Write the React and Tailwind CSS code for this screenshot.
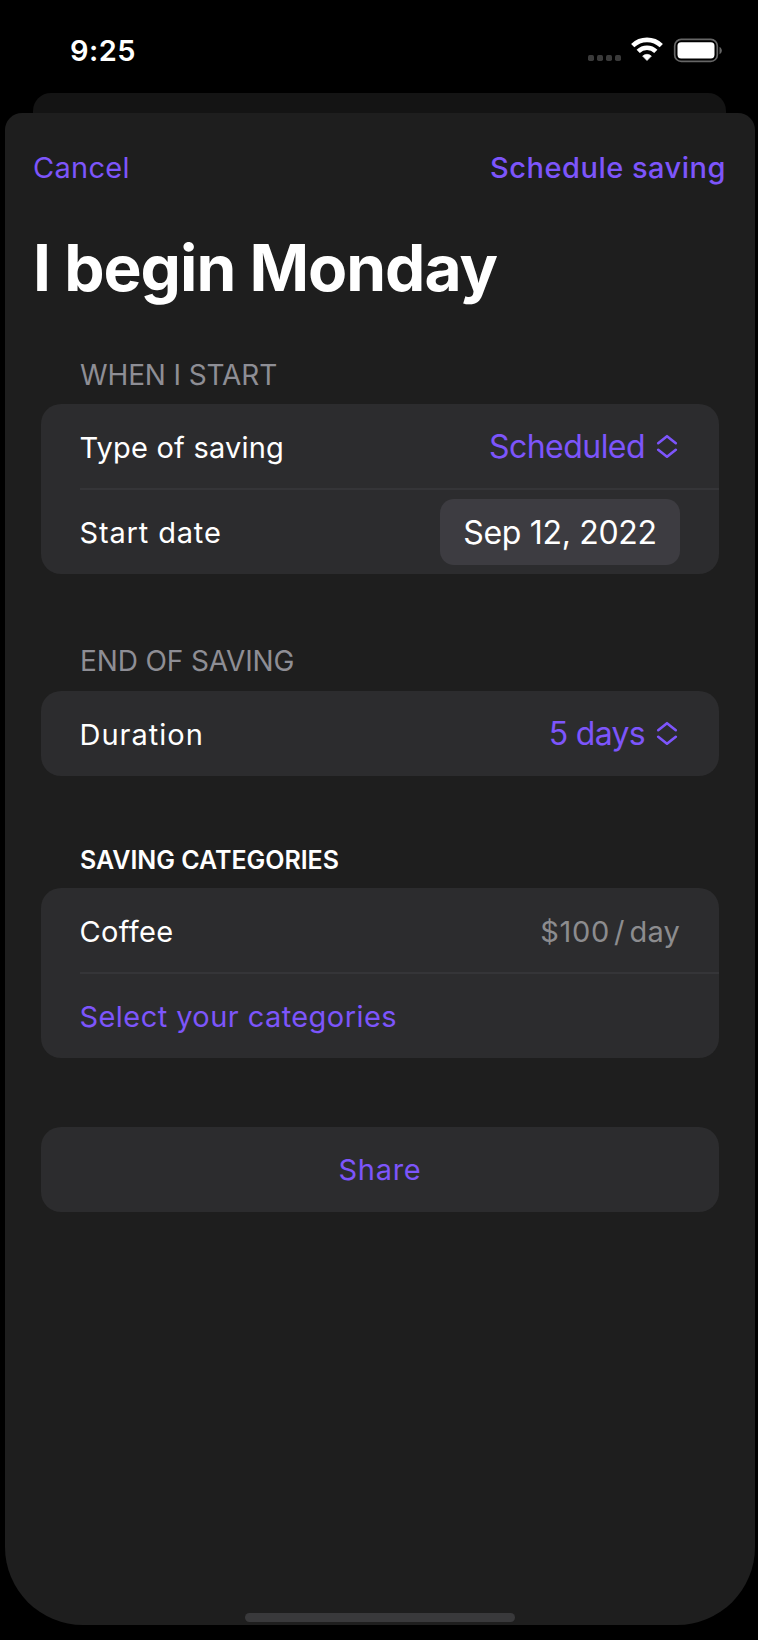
import React from "react";

function StatusBar() {
  return (
    <div className="flex h-[93px] items-start justify-between pl-[70px] pr-[35px]">
      <span className="mt-[35px] text-[29px] leading-[32px] font-semibold tracking-[0.5px]">9:25</span>
      <div className="mt-[37px] flex h-[26px] items-start">
        <svg width="34" height="8" viewBox="0 0 34 8" className="mt-[17px] fill-[#3a3a3a]">
          <rect x="0" y="1" width="6" height="6" rx="1.7" />
          <rect x="9" y="1" width="6" height="6" rx="1.7" />
          <rect x="18" y="1" width="6" height="6" rx="1.7" />
          <rect x="27" y="1" width="6" height="6" rx="1.7" />
        </svg>
        <svg width="32" height="24" viewBox="0 0 32 24" className="ml-[9px]">
          <g fill="none" stroke="#fff" strokeWidth="4.6">
            <path d="M1.7 8.6A20.6 20.6 0 0 1 30.3 8.6" />
            <path d="M7.2 14.3A12.6 12.6 0 0 1 24.8 14.3" />
          </g>
          <path d="M11.6 19.1a6.3 6.3 0 0 1 8.8 0L16 23.6Z" fill="#fff" stroke="#fff" strokeWidth="0.6" strokeLinejoin="round" />
        </svg>
        <svg width="50" height="26" viewBox="0 0 50 26" className="ml-[10px]">
          <rect x="1.7" y="2.4" width="42.6" height="22" rx="6.5" fill="none" stroke="#666" strokeWidth="1.7" />
          <rect x="4.5" y="5.2" width="37" height="16.2" rx="3.6" fill="#fff" />
          <path d="M46.5 10v7.2c1.5-.6 2.3-2 2.3-3.6s-.8-3-2.3-3.6Z" fill="#666" />
        </svg>
      </div>
    </div>
  );
}

function Chevrons() {
  return (
    <svg
      width="22"
      height="24"
      viewBox="0 0 22 24"
      className="-mt-px mr-[2px] ml-[11px]"
      fill="none"
      stroke="#7d55fb"
      strokeWidth="2.6"
      strokeLinecap="round"
      strokeLinejoin="round"
    >
      <path d="M2.2 9.2 11 2.2 19.8 9.2" />
      <path d="M2.2 15.8 11 22.8 19.8 15.8" />
    </svg>
  );
}

function Card({ children, className }) {
  return <div className={`mx-[36px] overflow-hidden rounded-[20px] bg-[#2c2c2e] ${className}`}>{children}</div>;
}

function Row({ children }) {
  return <div className="flex h-[85px] items-center justify-between pr-[39px] pl-[38.5px]">{children}</div>;
}

function Separator() {
  return <div className="-mt-px -mb-px ml-[39px] h-[2px] bg-[#353538]" />;
}

export default function App() {
  return (
    <div className="h-[1640px] w-[758px] overflow-hidden bg-black font-['Inter',sans-serif] text-white">
      <StatusBar />
      <div className="mr-[32px] ml-[33px] h-[20px] rounded-t-[18px] bg-[#141414]" />
      <div className="mr-[3px] ml-[5px] flex h-[1512px] flex-col rounded-t-[17px] rounded-b-[78px] bg-[#1e1e1e]">
        <div className="mt-[35px] flex h-[40px] items-center justify-between pr-[29px] pl-[28px] text-[29px] leading-[40px] text-[#7d55fb]">
          <span className="tracking-[0.3px]">Cancel</span>
          <span className="font-medium tracking-[0.5px]">Schedule saving</span>
        </div>
        <h1 className="mt-[42px] ml-[28px] text-[64px] leading-[76px] font-bold tracking-[-1px]">I begin Monday</h1>

        <div className="mt-[54px] ml-[75px] text-[28px] leading-[30px] tracking-[-0.13px] text-[#8e8e95]">WHEN I START</div>
        <Card className="mt-[14px]">
          <Row>
            <span className="pt-[2px] text-[29px] tracking-[0.2px]">Type of saving</span>
            <span className="flex items-center text-[32px] tracking-[-0.55px] text-[#7d55fb]">
              Scheduled
              <Chevrons />
            </span>
          </Row>
          <Separator />
          <Row>
            <span className="pt-[2px] text-[29px] tracking-[0.85px]">Start date</span>
            <span className="mt-px flex h-[66px] w-[240px] items-center justify-center rounded-[14px] bg-[#3d3c41] pt-[2px] text-[32px] tracking-[-0.31px]">
              Sep 12, 2022
            </span>
          </Row>
        </Card>

        <div className="mt-[72px] ml-[75px] text-[28px] leading-[30px] tracking-[-0.13px] text-[#8e8e95]">END OF SAVING</div>
        <Card className="mt-[15px]">
          <Row>
            <span className="pt-[2px] text-[29px] tracking-[1px]">Duration</span>
            <span className="flex items-center text-[32px] tracking-[-0.7px] text-[#7d55fb]">
              5 days
              <Chevrons />
            </span>
          </Row>
        </Card>

        <div className="mt-[69px] ml-[75px] text-[25px] leading-[30px] font-semibold tracking-[-0.03px]">SAVING CATEGORIES</div>
        <Card className="mt-[13px]">
          <Row>
            <span className="pt-[2px] text-[29px] tracking-[0.35px]">Coffee</span>
            <span className="flex pt-[2px] text-[29px] text-[#8c8c8f]">
              <span className="tracking-[0.7px]">$100</span>
              <span className="mr-[5px] ml-[4px]">/</span>
              <span className="tracking-[0.2px]">day</span>
            </span>
          </Row>
          <Separator />
          <Row>
            <span className="pt-[2px] text-[29px] tracking-[0.43px] text-[#7d55fb]">Select your categories</span>
          </Row>
        </Card>

        <Card className="mt-[69px]">
          <div className="flex h-[85px] items-center justify-center pt-px text-[29px] tracking-[0.7px] text-[#7d55fb]">Share</div>
        </Card>

        <div className="mt-auto mb-[3px] ml-[240px] h-[9px] w-[270px] rounded-full bg-[#39393b]" />
      </div>
    </div>
  );
}
